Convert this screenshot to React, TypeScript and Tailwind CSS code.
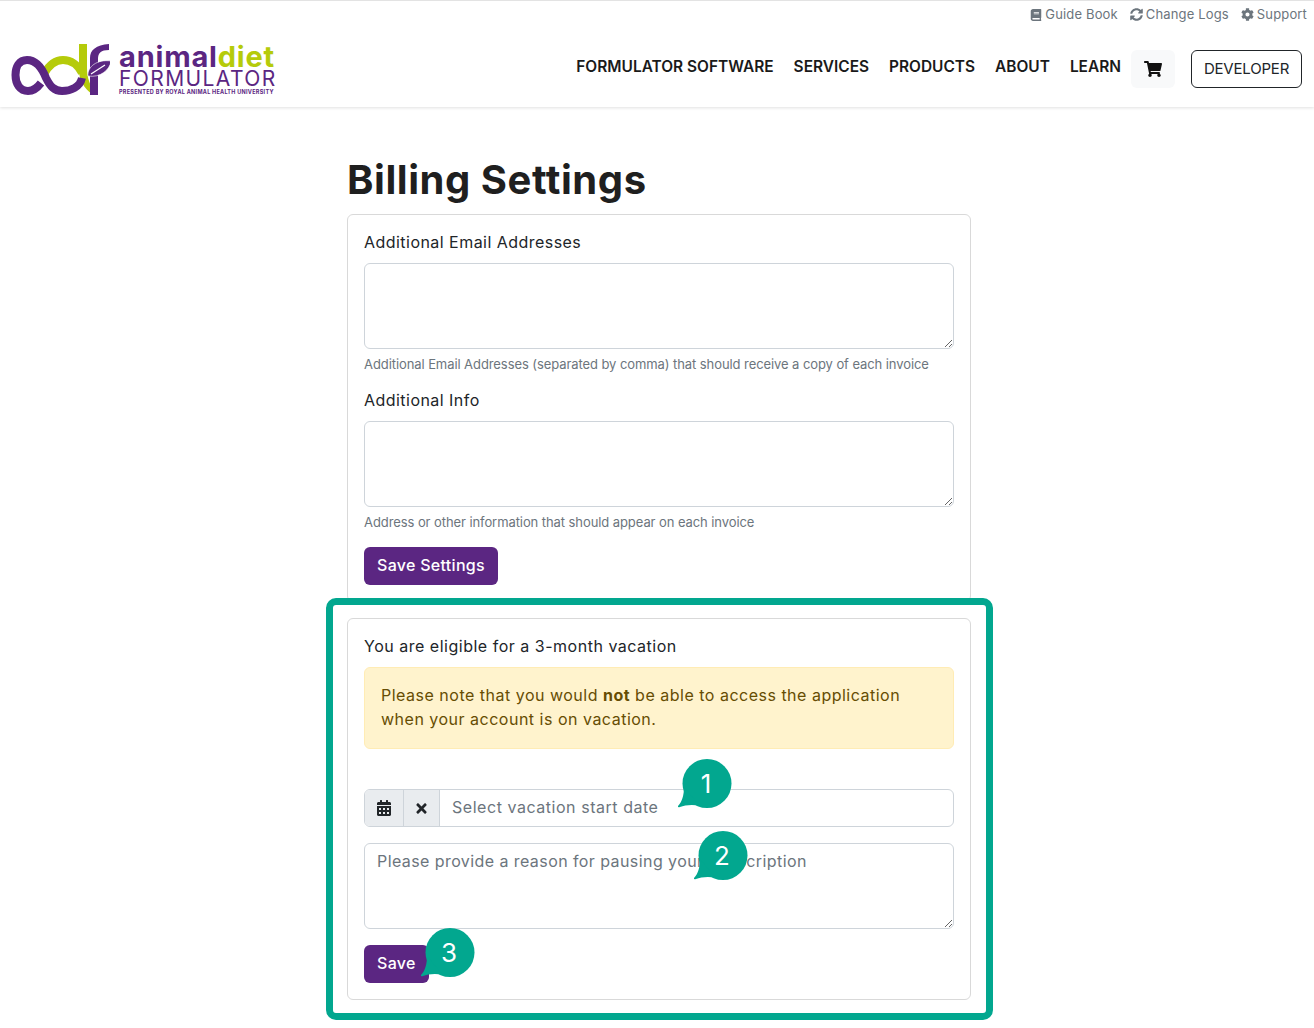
import React from "react";
import { FaBook, FaSyncAlt, FaCog, FaShoppingCart, FaCalendarAlt, FaTimes } from "react-icons/fa";

function Logo() {
  return (
    <div className="flex items-start gap-[9px] pt-[3px]">
      <svg width="100" height="56" viewBox="10 40 100 56" className="-mt-[2px]">
        <path d="M44 74C49 65 55 60 63 60C71 60 78 65 82 73" fill="none" stroke="#b5cb0a" strokeWidth="8" />
        <path d="M79 44L87 44L87 68C87 78 90 86 96 93L92 94C84 88 79 80 79 70Z" fill="#b5cb0a" />
        <path d="M82 78C80 87 71 91 62 91C54 91 50 86 46 78C42 68 36 60 27 60C19 60 15.500 67 15.500 75C15.500 84 20 91 28 91C34 91 38 87 41 83" fill="none" stroke="#5b2682" strokeWidth="8" />
        <path d="M90 95L90 58C90 50 96 45 109 44L109 50C101 50 98 53 98 59L98 95Z" fill="#5b2682" />
        <path d="M88 76C87 67 97 59 111 61C110 70 100 78 88 76Z" fill="#5b2682" stroke="#fff" strokeWidth="0.600" />
        <path d="M91 74L105 65" stroke="#fff" strokeWidth="1.200" />
      </svg>
      <div className="flex flex-col items-start pt-[2px] font-['Inter',sans-serif] text-[#5b2682]">
        <div className="text-[29px] leading-[25px] font-bold tracking-[0.8px] whitespace-nowrap">
          animal<span className="text-[#b5cb0a]">diet</span>
        </div>
        <div className="text-[21px] leading-[19px] font-normal tracking-[1.400px] whitespace-nowrap">FORMULATOR</div>
        <div className="text-[5.500px] leading-[7px] font-bold tracking-[0.27px] whitespace-nowrap mt-[1px]">PRESENTED BY ROYAL ANIMAL HEALTH UNIVERSITY</div>
      </div>
    </div>
  );
}

function Bubble({ n, className }: { n: string; className: string }) {
  return (
    <div className={"absolute w-[54px] h-[50px] " + className}>
      <svg width="54" height="50" viewBox="0 0 54 50" className="absolute inset-0">
        <circle cx="29" cy="24.500" r="24.500" fill="#02a78f" />
        <path d="M0 47C4 43 6 36 6 28L22 47C15 45 7 46 2 48C0 48.500 -1 48 0 47Z" fill="#02a78f" />
      </svg>
      <div className="absolute left-[4px] top-0 w-[48px] h-[49px] flex items-center justify-center text-white text-[26px] font-['Inter',sans-serif]">{n}</div>
    </div>
  );
}

const field = "block w-full border border-[#ced4da] rounded-[6px] bg-white h-[86px] px-3 pt-[5px] pb-[7px] text-[16px] leading-6 outline-none placeholder:text-[#6c757d] tracking-[0.42px]";

export default function App() {
  return (
    <div className="relative min-h-[1028px] bg-white font-['Inter',sans-serif] text-[#212529] overflow-hidden">
      <header className="flex justify-between border-t border-[#e3e3e3] h-[107px] pl-[10px] pr-[12px] shadow-[0_1px_3px_rgba(0,0,0,0.12)]">
        <div className="pt-[38px]"><Logo /></div>
        <div className="flex flex-col items-end">
          <div className="flex gap-[12px] h-[27px] items-center text-[13px] tracking-[0.15px] text-[#6c757d] -mr-[5px]">
            <a className="flex items-center gap-[3px]"><FaBook className="text-[12px]" />Guide Book</a>
            <a className="flex items-center gap-[3px]"><FaSyncAlt className="text-[13px]" />Change Logs</a>
            <a className="flex items-center gap-[3px]"><FaCog className="text-[13px]" />Support</a>
          </div>
          <nav className="flex items-center mt-[22px] h-[38px]">
            <div className="flex gap-5 text-[15.450px] font-semibold text-[#1a1a1a] -mt-1 whitespace-nowrap">
              <a>FORMULATOR SOFTWARE</a>
              <a>SERVICES</a>
              <a>PRODUCTS</a>
              <a>ABOUT</a>
              <a>LEARN</a>
            </div>
            <button className="ml-[10px] w-[44px] h-[38px] rounded-[6px] bg-[#f8f9fa] flex items-center justify-center text-[#111]"><FaShoppingCart className="text-[18px]" /></button>
            <button className="ml-4 w-[111px] h-[38px] rounded-[6px] border border-[#212529] text-[15px] tracking-[-0.2px] text-[#212529]">DEVELOPER</button>
          </nav>
        </div>
      </header>

      <main className="w-[624px] ml-[347px] pt-[49px]">
        <h1 className="text-[40px] leading-[48px] font-bold tracking-[0.55px] text-[#1f1f1f] mb-[10px] whitespace-nowrap">Billing Settings</h1>

        <section className="border border-[#d9d9d9] rounded-[6px] px-4 pt-[15px] pb-4 mb-4">
          <label className="block text-[16px] leading-6 mb-[9px] tracking-[0.46px]">Additional Email Addresses</label>
          <textarea className={field} />
          <p className="text-[13px] leading-5 text-[#6c757d] mt-[5px] mb-[14px] whitespace-nowrap tracking-[-0.08px]">Additional Email Addresses (separated by comma) that should receive a copy of each invoice</p>
          <label className="block text-[16px] leading-6 mb-[9px] tracking-[0.46px]">Additional Info</label>
          <textarea className={field} />
          <p className="text-[13px] leading-5 text-[#6c757d] mt-[5px] mb-[15px] whitespace-nowrap tracking-[-0.08px]">Address or other information that should appear on each invoice</p>
          <button className="h-[38px] px-[13px] pb-[2px] rounded-[6px] bg-[#5b2682] text-white text-[16px] font-medium tracking-[0.3px]">Save Settings</button>
        </section>

        <section className="border border-[#d9d9d9] rounded-[6px] px-4 pt-[15px] pb-4">
          <p className="text-[16px] leading-6 mb-[9px] tracking-[0.51px]">You are eligible for a 3-month vacation</p>
          <div className="border border-[#ffecb5] bg-[#fff3cd] rounded-[6px] text-[#664d03] px-4 pt-[15px] pb-[17px] text-[16px] leading-6 mb-10 tracking-[0.5px]">
            Please note that you would <b>not</b> be able to access the application<br />when your account is on vacation.
          </div>
          <div className="flex h-[38px] border border-[#ced4da] rounded-[6px] overflow-hidden mb-4">
            <div className="w-[39px] bg-[#e9ecef] border-r border-[#ced4da] flex items-center justify-center text-[#212529]"><FaCalendarAlt className="text-[16px]" /></div>
            <div className="w-[36px] bg-[#e9ecef] border-r border-[#ced4da] flex items-center justify-center text-[#212529]"><FaTimes className="text-[15px]" /></div>
            <input placeholder="Select vacation start date" className="flex-1 px-3 pb-[2px] text-[16px] outline-none placeholder:text-[#6c757d] tracking-[0.54px]" />
          </div>
          <textarea className={field} placeholder="Please provide a reason for pausing your subscription" />
          <button className="block mt-4 h-[38px] px-[13px] pb-[2px] rounded-[6px] bg-[#5b2682] text-white text-[16px] font-medium tracking-[0.3px]">Save</button>
        </section>
      </main>

      <div className="absolute left-[326px] top-[598px] w-[667px] h-[422px] border-[7px] border-[#02a78f] rounded-[10px] pointer-events-none" />
      <Bubble n="1" className="left-[678px] top-[759px]" />
      <Bubble n="2" className="left-[694px] top-[831px]" />
      <Bubble n="3" className="left-[421px] top-[928px]" />
    </div>
  );
}
